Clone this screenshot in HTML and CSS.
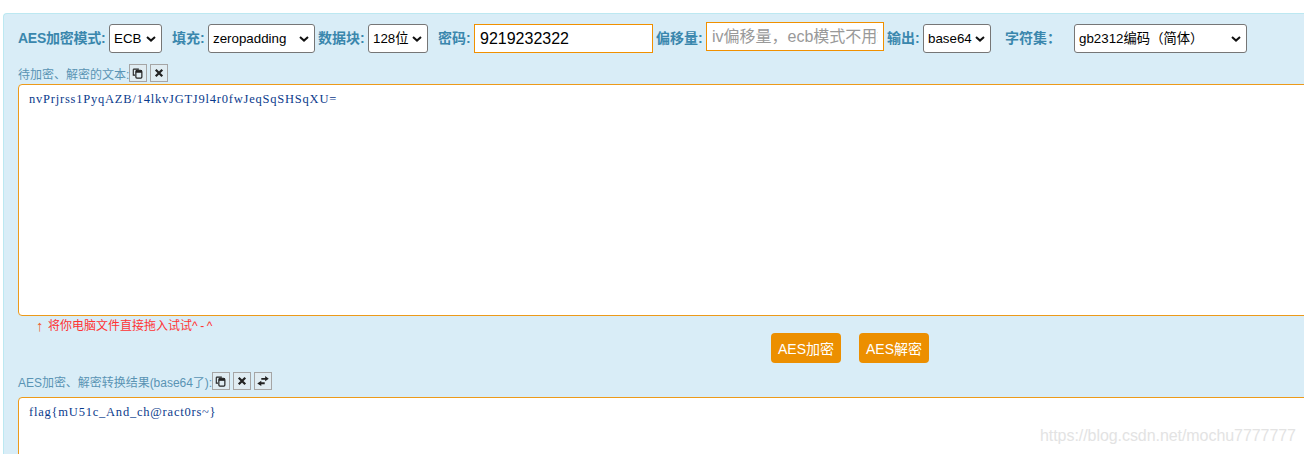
FILE: index.html
```html
<!DOCTYPE html>
<html lang="zh">
<head>
<meta charset="utf-8">
<title>AES</title>
<link rel="stylesheet" href="styles.css">
</head>
<body>
<main class="panel">
  <form class="options">
    <label class="lbl lbl-first">AES加密模式:</label>
    <select class="sel sel-mode"><option>ECB</option></select>
    <label class="lbl lbl-pad">填充:</label>
    <select class="sel sel-pad"><option>zeropadding</option></select>
    <label class="lbl lbl-block">数据块:</label>
    <select class="sel sel-block"><option>128位</option></select>
    <label class="lbl lbl-key">密码:</label>
    <input class="inp inp-key" value="9219232322">
    <label class="lbl lbl-iv">偏移量:</label>
    <input class="inp inp-iv" placeholder="iv偏移量，ecb模式不用填写">
    <label class="lbl lbl-out">输出:</label>
    <select class="sel sel-out"><option>base64</option></select>
    <label class="lbl lbl-charset">字符集：</label>
    <select class="sel sel-charset"><option>gb2312编码（简体）</option></select>
  </form>

  <div class="caption caption-src">
    <span>待加密、解密的文本:</span>
    <button class="icon-btn" type="button"><svg viewBox="0 0 14 14"><path d="M1.5 2.5h6.5M1.5 2.5v7h2" fill="none" stroke="#222" stroke-width="1.3"/><path d="M4.5 5.5c0-1 .8-1.7 1.7-1.7h3.6c1 0 1.7.7 1.7 1.7v6.2c0 .7-.5 1.2-1.2 1.2H5.7c-.7 0-1.2-.5-1.2-1.2z" fill="none" stroke="#222" stroke-width="1.4"/><path d="M4.5 3.8h7v3h-7z" fill="#222"/></svg></button>
    <button class="icon-btn" type="button"><svg viewBox="0 0 14 14"><path d="M3.2 3.2l7.6 7.6M10.8 3.2l-7.6 7.6" stroke="#222" stroke-width="2.6"/></svg></button>
  </div>
  <textarea class="area area-src">nvPrjrss1PyqAZB/14lkvJGTJ9l4r0fwJeqSqSHSqXU=</textarea>
  <p class="hint"><span class="arrow">↑</span><span class="hint-text">将你电脑文件直接拖入试试<span class="hint-tail">^-^</span></span></p>

  <div class="actions">
    <button class="go" type="button">AES加密</button>
    <button class="go" type="button">AES解密</button>
  </div>

  <div class="caption caption-res">
    <span>AES加密、解密转换结果(base64了):</span>
    <button class="icon-btn" type="button"><svg viewBox="0 0 14 14"><path d="M1.5 2.5h6.5M1.5 2.5v7h2" fill="none" stroke="#222" stroke-width="1.3"/><path d="M4.5 5.5c0-1 .8-1.7 1.7-1.7h3.6c1 0 1.7.7 1.7 1.7v6.2c0 .7-.5 1.2-1.2 1.2H5.7c-.7 0-1.2-.5-1.2-1.2z" fill="none" stroke="#222" stroke-width="1.4"/><path d="M4.5 3.8h7v3h-7z" fill="#222"/></svg></button>
    <button class="icon-btn" type="button"><svg viewBox="0 0 14 14"><path d="M3.2 3.2l7.6 7.6M10.8 3.2l-7.6 7.6" stroke="#222" stroke-width="2.6"/></svg></button>
    <button class="icon-btn" type="button"><svg viewBox="0 0 14 14"><path d="M5 3.4h4.5V1.2L13.7 4.4 9.5 7.2V5.5H5z" fill="#222"/><path d="M9 8.5H5V6.7L.3 9.8 5 12.9v-2.1h4z" fill="#222"/></svg></button>
  </div>
  <textarea class="area area-res">flag{mU51c_And_ch@ract0rs~}</textarea>
</main>
<div class="watermark">https://blog.csdn.net/mochu7777777</div>
</body>
</html>
```
FILE: styles.css
```css
* { box-sizing: border-box; }
html, body { margin: 0; height: 454px; overflow: hidden; background: #fff; }
body { position: relative; font-family: "Liberation Sans", "Noto Sans CJK SC", sans-serif; }

.panel {
  width: 1301px;
  height: 441px;
  margin: 13px 0 0 3px;
  padding: 10px 0 0 14px;
  background: #d9edf7;
  border: 1px solid #bce8f1;
  border-right: 0;
  border-bottom: 0;
  border-radius: 4px 0 0 0;
  overflow: hidden;
}

.options { display: flex; align-items: flex-start; height: 40px; }
.lbl {
  height: 29px;
  line-height: 29px;
  font-size: 14px;
  font-weight: 700;
  color: #3a87ad;
  white-space: nowrap;
}
.lbl-first { width: 91px; letter-spacing: -0.25px; }
.lbl-pad { width: 36px; margin-left: 10px; }
.lbl-block { width: 50px; margin-left: 3px; }
.lbl-key { width: 36px; margin-left: 10px; }
.lbl-iv { width: 50px; margin-left: 3px; }
.lbl-out { width: 36px; margin-left: 3px; }
.lbl-charset { width: 69px; margin-left: 14px; }

.sel {
  appearance: none;
  height: 29px;
  padding: 0 0 0 4px;
  font: 13.33px "Liberation Sans", "Noto Sans CJK SC", sans-serif;
  color: #000;
  background: #fff url("data:image/svg+xml,%3Csvg xmlns='http://www.w3.org/2000/svg' width='10' height='6' viewBox='0 0 10 6'%3E%3Cpath d='M1 1l4 3.6L9 1' fill='none' stroke='%23111' stroke-width='2'/%3E%3C/svg%3E") no-repeat right 5px center;
  border: 1px solid #767676;
  border-radius: 3px;
}
.sel-mode { width: 53px; }
.sel-pad { width: 107px; }
.sel-block { width: 60px; }
.sel-out { width: 68px; }
.sel-charset { width: 173px; }

.inp {
  width: 179px;
  height: 29px;
  padding: 0 5px;
  font: 16px "Liberation Sans", "Noto Sans CJK SC", sans-serif;
  color: #000;
  background: #fff;
  border: 1px solid #f09000;
  outline: 0.4px solid #f09000;
  outline-offset: -1px;
}
.inp::placeholder { color: #999; opacity: 1; }
.inp-iv { margin: -2px 0 0 0; width: 178px; }

.caption {
  display: flex;
  align-items: center;
  height: 18px;
  font-size: 12px;
  color: #5a94b4;
  white-space: nowrap;
}
.caption-res { margin-top: 9px; letter-spacing: -0.03px; }
.icon-btn {
  display: flex;
  align-items: center;
  justify-content: center;
  width: 18px;
  height: 18px;
  padding: 0;
  margin-right: 3px;
  background: #e0ecf2;
  border: 1px solid #a5a5a5;
}
.icon-btn svg { width: 12px; height: 12px; display: block; }

.area {
  display: block;
  width: 1330px;
  padding: 7px 10px;
  font: 12.5px/14px "Liberation Serif", serif;
  letter-spacing: 0.78px;
  color: #0a3a8c;
  background: #fff;
  border: 1px solid #ec9a1a;
  border-radius: 4px;
  outline: none;
  resize: none;
}
.area-src { height: 232px; margin-top: 2px; }
.area-res { height: 80px; margin-top: 7px; padding-top: 7px; }

.hint {
  display: flex;
  align-items: center;
  height: 17px;
  margin: 0 0 0 18px;
  padding-top: 3px;
  font-size: 12px;
  line-height: 14px;
  color: #f33;
}
.arrow { width: 12px; font-size: 15px; font-weight: 700; color: #f06030; }
.hint-tail { letter-spacing: 2.5px; }

.actions { display: flex; gap: 18px; margin: 0 0 0 753px; }
.go {
  width: 70px;
  height: 30px;
  padding: 0;
  font: 14px "Liberation Sans", "Noto Sans CJK SC", sans-serif;
  color: #fff;
  background: #ec8f00;
  border: 0;
  border-radius: 4px;
}

.watermark {
  position: absolute;
  left: 1040px;
  top: 426px;
  font-size: 16px;
  letter-spacing: -0.06px;
  line-height: 20px;
  color: #e3e3e3;
  white-space: nowrap;
}
```
